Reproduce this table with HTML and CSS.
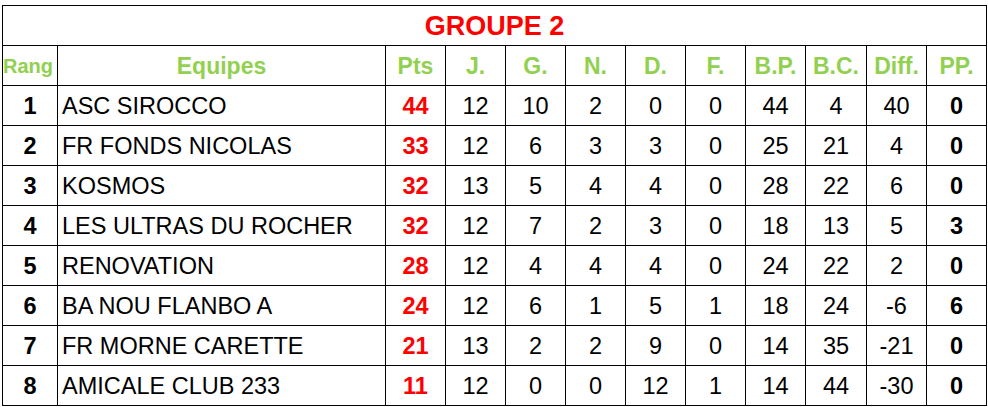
FILE: index.html
```html
<!DOCTYPE html>
<html lang="fr">
<head>
<meta charset="utf-8">
<title>Groupe 2</title>
<link rel="stylesheet" href="styles.css">
</head>
<body>
<table class="standings">
  <colgroup>
    <col class="c-rang"><col class="c-team">
    <col class="c-num"><col class="c-num"><col class="c-num"><col class="c-num"><col class="c-num"><col class="c-num"><col class="c-num">
    <col class="c-bc"><col class="c-num"><col class="c-pp">
  </colgroup>
  <thead>
    <tr class="title-row"><th colspan="12" class="title">GROUPE 2</th></tr>
    <tr class="head-row">
      <th class="h-rang">Rang</th><th>Equipes</th><th>Pts</th><th>J.</th><th>G.</th><th>N.</th><th>D.</th><th>F.</th><th>B.P.</th><th>B.C.</th><th>Diff.</th><th>PP.</th>
    </tr>
  </thead>
  <tbody>
    <tr><td class="rank">1</td><td class="team">ASC SIROCCO</td><td class="pts">44</td><td>12</td><td>10</td><td>2</td><td>0</td><td>0</td><td>44</td><td>4</td><td>40</td><td class="pp">0</td></tr>
    <tr><td class="rank">2</td><td class="team">FR FONDS NICOLAS</td><td class="pts">33</td><td>12</td><td>6</td><td>3</td><td>3</td><td>0</td><td>25</td><td>21</td><td>4</td><td class="pp">0</td></tr>
    <tr><td class="rank">3</td><td class="team">KOSMOS</td><td class="pts">32</td><td>13</td><td>5</td><td>4</td><td>4</td><td>0</td><td>28</td><td>22</td><td>6</td><td class="pp">0</td></tr>
    <tr><td class="rank">4</td><td class="team">LES ULTRAS DU ROCHER</td><td class="pts">32</td><td>12</td><td>7</td><td>2</td><td>3</td><td>0</td><td>18</td><td>13</td><td>5</td><td class="pp">3</td></tr>
    <tr><td class="rank">5</td><td class="team">RENOVATION</td><td class="pts">28</td><td>12</td><td>4</td><td>4</td><td>4</td><td>0</td><td>24</td><td>22</td><td>2</td><td class="pp">0</td></tr>
    <tr><td class="rank">6</td><td class="team">BA NOU FLANBO A</td><td class="pts">24</td><td>12</td><td>6</td><td>1</td><td>5</td><td>1</td><td>18</td><td>24</td><td>-6</td><td class="pp">6</td></tr>
    <tr><td class="rank">7</td><td class="team">FR MORNE CARETTE</td><td class="pts">21</td><td>13</td><td>2</td><td>2</td><td>9</td><td>0</td><td>14</td><td>35</td><td>-21</td><td class="pp">0</td></tr>
    <tr><td class="rank">8</td><td class="team">AMICALE CLUB 233</td><td class="pts">11</td><td>12</td><td>0</td><td>0</td><td>12</td><td>1</td><td>14</td><td>44</td><td>-30</td><td class="pp">0</td></tr>
  </tbody>
</table>
</body>
</html>
```
FILE: styles.css
```css
html, body {
  margin: 0;
  padding: 0;
  background: #ffffff;
}

body {
  padding: 5px 0 0 2px;
  font-family: "Liberation Sans", Arial, sans-serif;
  color: #000000;
}

.standings {
  border-collapse: collapse;
  table-layout: fixed;
  width: 984px;
}

.c-rang { width: 55px; }
.c-team { width: 328px; }
.c-num { width: 60px; }
.c-bc { width: 61px; }
.c-pp { width: 60px; }

.standings th,
.standings td {
  border: 1px solid #000000;
  height: 39px;
  padding: 0;
  line-height: 26px;
  text-align: center;
  vertical-align: middle;
  white-space: nowrap;
  overflow: hidden;
}

.title {
  color: #ff0000;
  font-size: 27px;
  font-weight: bold;
}

.head-row th {
  color: #92d050;
  font-size: 23px;
  font-weight: bold;
}

.head-row .h-rang {
  font-size: 20px;
  text-align: left;
  padding-left: 0;
}

.standings td {
  font-size: 23.5px;
  height: 38px;
  padding-top: 1px;
}

.standings td.team {
  text-align: left;
  padding-left: 4px;
}

.standings td.rank {
  font-weight: bold;
}

.standings td.pts {
  color: #ff0000;
  font-weight: bold;
}

.standings td.pp {
  font-weight: bold;
}
```
